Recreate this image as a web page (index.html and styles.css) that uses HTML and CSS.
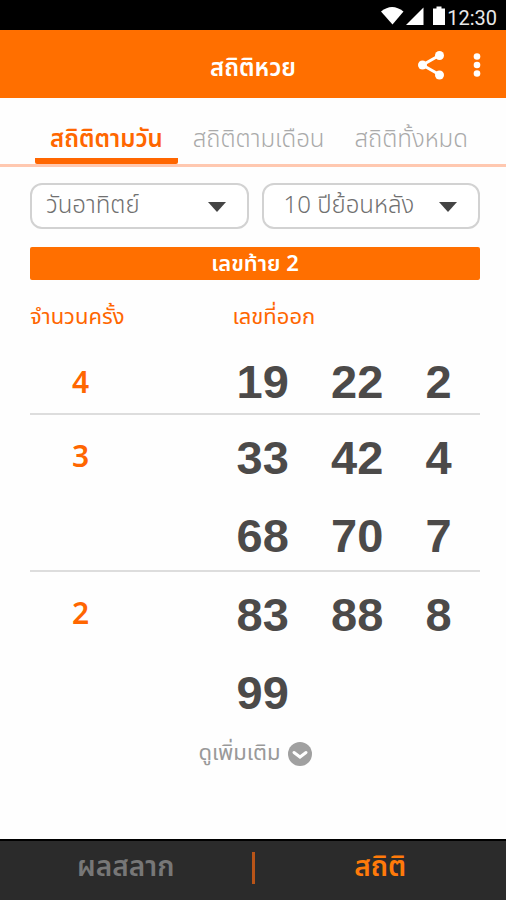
FILE: index.html
```html
<!DOCTYPE html>
<html lang="th">
<head>
	<meta charset="UTF-8">
	<meta name="viewport" content="width=device-width, initial-scale=1">
	<title>สถิติหวย</title>
	<link rel="stylesheet" href="styles.css">
</head>
<body>
	<div class="app">
		<div class="status">
			<svg class="status-icons" width="66" height="20" viewBox="0 0 66 20" fill="#fff">
				<path d="M0 6.500Q11 -2.500 22.500 6.500L11.500 19.500Z"/>
				<path d="M25 20L42.500 2.500V20Z"/>
				<path d="M52 3.500H55.500V1.500H60.500V3.500H64V20H52Z"/>
			</svg>
			<span>12:30</span>
		</div>
		<header class="header">
			<h1>สถิติหวย</h1>
			<div class="actions">
				<button class="icon-btn" aria-label="แชร์">
					<svg width="28" height="30" viewBox="0 0 28 30">
						<path d="M23 5L5.500 15L23 25" fill="none" stroke="#fff" stroke-width="3"/>
						<g fill="#fff"><circle cx="22.500" cy="5.500" r="4.500"/><circle cx="5.500" cy="15" r="4.500"/><circle cx="22.500" cy="25" r="4.500"/></g>
					</svg>
				</button>
				<button class="icon-btn" aria-label="เมนู">
					<svg width="8" height="24" viewBox="0 0 8 24" fill="#fff">
						<circle cx="4" cy="3.500" r="3.300"/><circle cx="4" cy="12" r="3.300"/><circle cx="4" cy="20.500" r="3.300"/>
					</svg>
				</button>
			</div>
		</header>
		<nav class="tabs">
			<a href="#day" class="tab active">สถิติตามวัน</a>
			<a href="#month" class="tab">สถิติตามเดือน</a>
			<a href="#all" class="tab">สถิติทั้งหมด</a>
		</nav>
		<main class="content">
			<div class="filters">
				<div class="filter">
					<select aria-label="วัน">
						<option>วันอาทิตย์</option>
						<option>วันจันทร์</option>
					</select>
					<svg class="arrow" width="18" height="10" viewBox="0 0 18 10"><path d="M0 0H18L9 10Z" fill="#444"/></svg>
				</div>
				<div class="filter filter-year">
					<select aria-label="ช่วงเวลา">
						<option>10 ปีย้อนหลัง</option>
						<option>5 ปีย้อนหลัง</option>
					</select>
					<svg class="arrow" width="18" height="10" viewBox="0 0 18 10"><path d="M0 0H18L9 10Z" fill="#444"/></svg>
				</div>
			</div>
			<h2 class="banner">เลขท้าย 2</h2>
			<table class="stats">
				<colgroup>
					<col class="col-count">
					<col class="col-number">
					<col class="col-number">
					<col>
				</colgroup>
				<thead>
					<tr>
						<th>จำนวนครั้ง</th>
						<th colspan="3">เลขที่ออก</th>
					</tr>
				</thead>
				<tbody>
					<tr>
						<td class="count">4</td>
						<td>19</td>
						<td>22</td>
						<td>2</td>
					</tr>
				</tbody>
				<tbody class="group">
					<tr>
						<td class="count" rowspan="2">3</td>
						<td>33</td>
						<td>42</td>
						<td>4</td>
					</tr>
					<tr>
						<td>68</td>
						<td>70</td>
						<td>7</td>
					</tr>
				</tbody>
				<tbody class="group">
					<tr>
						<td class="count" rowspan="2">2</td>
						<td>83</td>
						<td>88</td>
						<td>8</td>
					</tr>
					<tr>
						<td>99</td>
						<td></td>
						<td></td>
					</tr>
				</tbody>
			</table>
			<button class="more">
				ดูเพิ่มเติม
				<svg width="24" height="24" viewBox="0 0 24 24">
					<circle cx="12" cy="12" r="12" fill="#a0a0a0"/>
					<path d="M6 10.500L12 15L18 10.500" fill="none" stroke="#fff" stroke-width="3" stroke-linecap="round"/>
				</svg>
			</button>
		</main>
		<nav class="bottom">
			<a href="#result">ผลสลาก</a>
			<a href="#stat" class="active">สถิติ</a>
		</nav>
	</div>
</body>
</html>
```
FILE: styles.css
```css
* {
	box-sizing: border-box;
}

body {
	margin: 0;
	background-color: #fefefe;
	font-family: "Noto Sans Thai", "Noto Sans", sans-serif;
}

button {
	padding: 0;
	border: 0;
	background: none;
	font-family: inherit;
}

a {
	text-decoration: none;
}

svg {
	display: block;
}

.app {
	display: flex;
	flex-direction: column;
	min-height: 100vh;
}

/* status bar */
.status {
	display: flex;
	justify-content: flex-end;
	align-items: center;
	height: 30px;
	padding-right: 9px;
	background-color: #000;
	color: #e8e8e8;
	font-family: Roboto, sans-serif;
	font-size: 20px;
	line-height: 24px;
}

.status span {
	padding-top: 6px;
}

/* header */
.header {
	display: grid;
	grid-template-columns: 1fr auto 1fr;
	align-items: center;
	height: 68px;
	padding: 2px 25px 0;
	background-color: #ff6f00;
	color: #fff;
}

.header h1 {
	grid-column: 2;
	margin: 0;
	padding-top: 8px;
	font-size: 24px;
	line-height: 36px;
	font-weight: 600;
}

.actions {
	display: flex;
	justify-content: flex-end;
	align-items: center;
	gap: 28px;
}

/* tabs */
.tabs {
	display: flex;
	align-items: flex-end;
	height: 69px;
	padding-left: 35px;
	border-bottom: 3px solid #ffc8b0;
}

.tab {
	padding: 0 15px;
	border-bottom: 6px solid transparent;
	color: #aaa;
	font-size: 24px;
	line-height: 36px;
	font-weight: 300;
	white-space: nowrap;
}

.tab.active {
	border-color: #ff6600;
	border-radius: 2px;
	color: #ff6600;
	font-weight: 600;
}

/* filters */
.content {
	flex: 1;
	padding: 16px 26px 0 30px;
}

.filters {
	display: grid;
	grid-template-columns: 1fr 1fr;
	gap: 13px;
}

.filter {
	position: relative;
}

.filter select {
	width: 100%;
	height: 46px;
	padding: 0 44px 0 14px;
	appearance: none;
	border: 2px solid #d2d2d2;
	border-radius: 12px;
	background-color: #fff;
	color: #707070;
	font-family: inherit;
	font-size: 24px;
	font-weight: 300;
}

.filter-year select {
	padding-left: 20px;
}

.arrow {
	position: absolute;
	top: 19px;
	right: 23px;
	pointer-events: none;
}

.banner {
	margin: 18px 0 0;
	padding-top: 3px;
	border-radius: 2px;
	background-color: #ff6f00;
	color: #fff;
	font-size: 22px;
	line-height: 30px;
	font-weight: 600;
	text-align: center;
}

/* numbers */
.stats {
	width: 100%;
	table-layout: fixed;
	border-collapse: collapse;
}

.stats .col-count {
	width: 45%;
}

.stats .col-number {
	width: 21%;
}

.stats th {
	height: 70px;
	padding: 4px 0 0;
	color: #ff6600;
	font-size: 22px;
	font-weight: 400;
	text-align: left;
}

.stats td {
	height: 64px;
	padding: 0 0 0 4px;
	color: #4c4a49;
	font-family: "Liberation Sans", sans-serif;
	font-size: 47px;
	line-height: 54px;
	font-weight: bold;
}

.stats .count {
	padding-left: 42px;
	color: #ff6600;
	font-family: "Noto Sans", sans-serif;
	font-size: 30px;
	font-weight: 600;
}

.stats .group {
	border-top: 2px solid #ddd;
}

.stats .group td {
	height: 70px;
}

.stats .group tr:first-child td {
	height: 87px;
}

.stats .group .count {
	padding-top: 14px;
	vertical-align: top;
}

.more {
	display: flex;
	align-items: center;
	gap: 7px;
	margin: 8px auto;
	color: #999;
	font-size: 22px;
	line-height: 36px;
}

/* bottom bar */
.bottom {
	display: flex;
	align-items: center;
	height: 61px;
	padding-bottom: 6px;
	border-top: 2px solid #000;
	background-color: #2b2b2b;
}

.bottom a {
	flex: 1;
	color: #777;
	font-size: 28px;
	line-height: 32px;
	font-weight: 600;
	text-align: center;
}

.bottom a + a {
	border-left: 3px solid #b85418;
}

.bottom .active {
	color: #ff7a0a;
}
```
